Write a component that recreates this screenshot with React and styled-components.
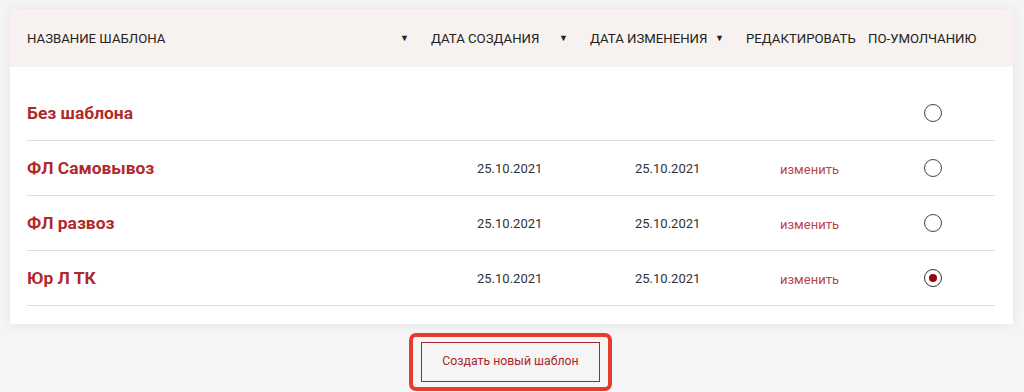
import React from 'react'
import styled, { createGlobalStyle } from 'styled-components'

const GlobalStyle = createGlobalStyle`
	html, body {
		margin: 0;
		padding: 0;
		background: #f5f5f5;
		font-family: Roboto, "Liberation Sans", Arial, sans-serif;
	}
`

const Page = styled.div`
	padding: 9px 11px 0 10px;
	display: flex;
	flex-direction: column;
	align-items: center;
`

const Card = styled.div`
	align-self: stretch;
	background: #fff;
	box-shadow: 0 0 12px rgba(0, 0, 0, 0.07);
`

const HeaderBar = styled.div`
	height: 58px;
	background: #f7f2ef;
	padding: 0 17px;
	display: grid;
	grid-template-columns: 393px 148px 145px 111px auto;
	column-gap: 11px;
	align-items: center;
`

const HeadCell = styled.div`
	display: flex;
	justify-content: space-between;
	align-items: center;
	padding-right: ${(props) => (props.sortable ? '11px' : '0')};
	font-size: 13.2px;
	color: #222;
	text-transform: uppercase;
	white-space: nowrap;
`

const Arrow = styled.span`
	font-size: 9px;
	color: #222;
`

const Body = styled.div`
	padding: 19px 18px 18px 17px;
`

const Row = styled.div`
	height: 54px;
	border-bottom: 1px solid #dcdcdc;
	display: grid;
	grid-template-columns: 450px 158px 145px 144px 18px;
	align-items: center;
`

const Name = styled.div`
	font-size: 17.4px;
	font-weight: 700;
	color: #b0292b;
`

const DateCell = styled.div`
	font-size: 13px;
	color: #333;
`

const EditLink = styled.a`
	font-size: 13px;
	color: #b8454a;
	text-decoration: none;
	cursor: pointer;
`

const Radio = styled.span`
	box-sizing: border-box;
	width: 18px;
	height: 18px;
	border-radius: 50%;
	border: ${(props) => (props.checked ? '1.5px solid #333' : '1px solid #444')};
	display: flex;
	align-items: center;
	justify-content: center;
	&::after {
		content: '';
		width: 8px;
		height: 8px;
		border-radius: 50%;
		background: ${(props) => (props.checked ? '#990505' : 'transparent')};
	}
`

const Highlight = styled.div`
	margin-top: 9px;
	padding: 5px 8px;
	border: 4px solid #e53b30;
	border-radius: 7px;
	transform: translateX(-1px);
`

const CreateButton = styled.button`
	width: 179px;
	height: 40px;
	border: 1px solid #a8262b;
	background: transparent;
	color: #a8262b;
	font-family: Roboto, "Liberation Sans", Arial, sans-serif;
	font-size: 12.3px;
	padding: 0 0 2px;
	cursor: pointer;
	display: block;
`

const templates = [
	{ name: 'Без шаблона', created: '', updated: '', editable: false, isDefault: false },
	{ name: 'ФЛ Самовывоз', created: '25.10.2021', updated: '25.10.2021', editable: true, isDefault: false },
	{ name: 'ФЛ развоз', created: '25.10.2021', updated: '25.10.2021', editable: true, isDefault: false },
	{ name: 'Юр Л ТК', created: '25.10.2021', updated: '25.10.2021', editable: true, isDefault: true },
]

const App = () => (
	<>
		<GlobalStyle />
		<Page>
			<Card>
				<HeaderBar>
					<HeadCell sortable>
						Название шаблона <Arrow>▼</Arrow>
					</HeadCell>
					<HeadCell sortable>
						Дата создания <Arrow>▼</Arrow>
					</HeadCell>
					<HeadCell sortable>
						Дата изменения <Arrow>▼</Arrow>
					</HeadCell>
					<HeadCell>Редактировать</HeadCell>
					<HeadCell>По-умолчанию</HeadCell>
				</HeaderBar>
				<Body>
					{templates.map((t) => (
						<Row key={t.name}>
							<Name>{t.name}</Name>
							<DateCell>{t.created}</DateCell>
							<DateCell>{t.updated}</DateCell>
							<div>{t.editable && <EditLink>изменить</EditLink>}</div>
							<Radio checked={t.isDefault} />
						</Row>
					))}
				</Body>
			</Card>
			<Highlight>
				<CreateButton>Создать новый шаблон</CreateButton>
			</Highlight>
		</Page>
	</>
)

export default App
